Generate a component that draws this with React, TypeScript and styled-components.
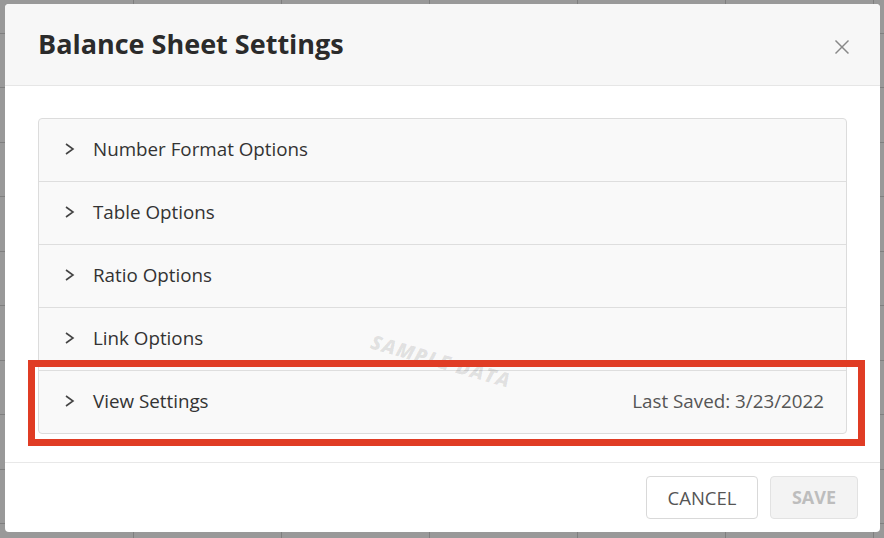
import React from "react";
import styled, { createGlobalStyle } from "styled-components";

const Global = createGlobalStyle`
  html, body { margin: 0; padding: 0; }
  body { font-family: "Open Sans", "Liberation Sans", sans-serif; }
  * { box-sizing: border-box; }
`;

const Page = styled.div`
  position: relative;
  width: 884px;
  height: 538px;
  overflow: hidden;
  background: #ffffff;
`;

const BgTable = styled.div`
  margin-top: -21px;
  margin-left: -14px;
  display: flex;
  flex-direction: column;
`;

const BgRow = styled.div`
  display: grid;
  grid-template-columns: repeat(7, 148px);
  height: 54.5px;
  border-bottom: 1px solid #d4d4d4;
`;

const BgCell = styled.div`
  border-right: 1px solid #d4d4d4;
  display: flex;
  align-items: flex-end;
  justify-content: flex-end;
  padding: 0 22px 30px 0;
  font-size: 17px;
  color: #222;
`;

const Backdrop = styled.div`
  position: absolute;
  inset: 0;
  background: rgba(0, 0, 0, 0.4);
`;

const Modal = styled.div`
  position: absolute;
  left: 5px;
  top: 4px;
  width: 875px;
  height: 528px;
  background: #fff;
  border-radius: 4px;
  display: flex;
  flex-direction: column;
  overflow: hidden;
`;

const Header = styled.div`
  height: 82px;
  flex: none;
  background: #f7f7f7;
  border-bottom: 1px solid #e6e6e6;
  display: flex;
  align-items: center;
  justify-content: space-between;
  padding: 0 30px 0 33px;
`;

const Title = styled.h1`
  margin: 0 0 2px 0;
  font-size: 27px;
  font-weight: 700;
  color: #2b2b2b;
`;

const CloseButton = styled.button`
  border: none;
  background: transparent;
  padding: 0;
  width: 16px;
  height: 16px;
  display: flex;
  margin-top: 4px;
`;

const Body = styled.div`
  flex: 1;
  padding: 32px 33px 28px 33px;
  border-bottom: 1px solid #e8e8e8;
`;

const Panel = styled.div`
  border: 1px solid #dcdcdc;
  border-radius: 4px;
  background: #f9f9f9;
  display: flex;
  flex-direction: column;
`;

const Row = styled.div<{ $last?: boolean }>`
  height: ${(p) => (p.$last ? 62 : 63)}px;
  display: flex;
  align-items: center;
  padding: 0 22px 2px 25px;
  border-bottom: ${(p) => (p.$last ? "none" : "1px solid #dedede")};
`;

const Chevron = styled.span`
  width: 12px;
  display: flex;
  margin-right: 17px;
`;

const RowLabel = styled.span`
  font-size: 18.8px;
  color: #333;
  flex: 1;
`;

const Meta = styled.span`
  font-size: 18.8px;
  color: #555;
`;

const Footer = styled.div`
  height: 70px;
  flex: none;
  display: flex;
  align-items: center;
  justify-content: flex-end;
  gap: 12px;
  padding: 0 22px 2px 0;
`;

const Button = styled.button<{ $disabled?: boolean }>`
  height: 43px;
  padding: 0 18px;
  border-radius: 4px;
  font-family: "Open Sans", "Liberation Sans", sans-serif;
  font-size: ${(p) => (p.$disabled ? 18 : 18.5)}px;
  font-weight: ${(p) => (p.$disabled ? 700 : 400)};
  color: ${(p) => (p.$disabled ? "#bdbdbd" : "#555")};
  background: ${(p) => (p.$disabled ? "#f3f3f3" : "#fff")};
  border: 1px solid ${(p) => (p.$disabled ? "#e2e2e2" : "#d9d9d9")};
  min-width: ${(p) => (p.$disabled ? 88 : 112)}px;
`;

const Watermark = styled.div`
  position: absolute;
  left: 375px;
  top: 328px;
  font-size: 20px;
  font-weight: 800;
  font-style: italic;
  letter-spacing: 1px;
  color: rgba(0, 0, 0, 0.1);
  transform: rotate(16deg);
  transform-origin: left top;
  pointer-events: none;
  white-space: nowrap;
`;

const Highlight = styled.div`
  position: absolute;
  left: 28px;
  top: 360px;
  width: 837px;
  height: 86px;
  border: 7px solid #e03c24;
  pointer-events: none;
`;

const ChevronIcon = () => (
  <svg width="12" height="14" viewBox="0 0 12 14">
    <polyline points="2,2 9,7 2,12" fill="none" stroke="#444" strokeWidth="1.6" />
  </svg>
);

const CloseIcon = () => (
  <svg width="16" height="16" viewBox="0 0 16 16">
    <line x1="1.5" y1="1.5" x2="14.5" y2="14.5" stroke="#888" strokeWidth="1.5" />
    <line x1="14.5" y1="1.5" x2="1.5" y2="14.5" stroke="#888" strokeWidth="1.5" />
  </svg>
);

const bgValues = ["1.6M", "2.4M", "2.5M", "1.7M", "2.0M", "7.1M", ""];
const items = ["Number Format Options", "Table Options", "Ratio Options", "Link Options", "View Settings"];

export default function App() {
  return (
    <Page>
      <Global />
      <BgTable>
        {Array.from({ length: 11 }).map((_, r) => (
          <BgRow key={r}>
            {bgValues.map((v, c) => (
              <BgCell key={c}>{r === 0 ? v : ""}</BgCell>
            ))}
          </BgRow>
        ))}
      </BgTable>
      <Backdrop />
      <Modal>
        <Header>
          <Title>Balance Sheet Settings</Title>
          <CloseButton aria-label="Close">
            <CloseIcon />
          </CloseButton>
        </Header>
        <Body>
          <Panel>
            {items.map((label, i) => (
              <Row key={label} $last={i === items.length - 1}>
                <Chevron>
                  <ChevronIcon />
                </Chevron>
                <RowLabel>{label}</RowLabel>
                {i === items.length - 1 && <Meta>Last Saved: 3/23/2022</Meta>}
              </Row>
            ))}
          </Panel>
        </Body>
        <Footer>
          <Button>CANCEL</Button>
          <Button $disabled>SAVE</Button>
        </Footer>
      </Modal>
      <Watermark>SAMPLE DATA</Watermark>
      <Highlight />
    </Page>
  );
}
